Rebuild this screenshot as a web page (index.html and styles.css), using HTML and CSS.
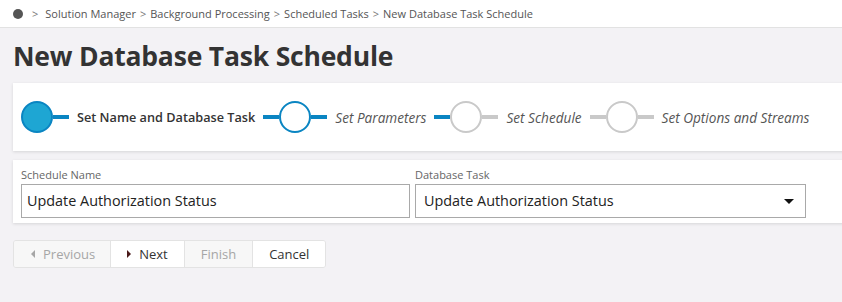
FILE: index.html
```html
<!DOCTYPE html>
<html lang="en">

<head>
    <meta charset="UTF-8">
    <meta name="viewport" content="width=device-width, initial-scale=1.0">
    <title>New Database Task Schedule</title>
    <link rel="stylesheet" href="styles.css">
</head>

<body>
    <div class="breadcrumb">
        <span class="home-dot"></span>
        <span class="sep first">&gt;</span>
        <span>Solution Manager</span>
        <span class="sep">&gt;</span>
        <span>Background Processing</span>
        <span class="sep">&gt;</span>
        <span>Scheduled Tasks</span>
        <span class="sep">&gt;</span>
        <span>New Database Task Schedule</span>
    </div>

    <div class="page">
        <h1>New Database Task Schedule</h1>

        <div class="panel wizard">
            <div class="step done">
                <span class="circle"></span>
                <span class="line"></span>
                <span class="step-label">Set Name and Database Task</span>
            </div>
            <div class="step current">
                <span class="line"></span>
                <span class="circle"></span>
                <span class="line"></span>
                <span class="step-label">Set Parameters</span>
            </div>
            <div class="step todo after-current">
                <span class="line"></span>
                <span class="circle"></span>
                <span class="line"></span>
                <span class="step-label">Set Schedule</span>
            </div>
            <div class="step todo">
                <span class="line"></span>
                <span class="circle"></span>
                <span class="line"></span>
                <span class="step-label">Set Options and Streams</span>
            </div>
        </div>

        <div class="panel form">
            <div class="field">
                <label>Schedule Name</label>
                <div class="input">Update Authorization Status</div>
            </div>
            <div class="field">
                <label>Database Task</label>
                <div class="input select">
                    <span>Update Authorization Status</span>
                    <span class="caret"></span>
                </div>
            </div>
        </div>

        <div class="buttons">
            <button class="disabled"><span class="tri left"></span>Previous</button>
            <button><span class="tri right"></span>Next</button>
            <button class="disabled">Finish</button>
            <button>Cancel</button>
        </div>
    </div>
</body>
</html>
```

FILE: styles.css
```css
body {
    font-family: "Open Sans", Arial, sans-serif;
    margin: 0;
    padding: 0;
    background-color: #f3f2f5;
    color: #333;
    overflow: hidden;
}

.breadcrumb {
    display: flex;
    align-items: center;
    gap: 4px;
    height: 27px;
    padding-left: 13px;
    background-color: #fff;
    border-bottom: 1px solid #e2e2e2;
    font-size: 11px;
    color: #555;
}

.home-dot {
    width: 10px;
    height: 10px;
    border-radius: 50%;
    background-color: #555;
    margin-right: 5px;
}

.sep {
    color: #777;
}

.sep.first {
    margin-right: 3px;
}

.page {
    padding: 0 0 0 13px;
}

h1 {
    font-size: 26.5px;
    font-weight: 700;
    color: #333;
    margin: 0;
    padding: 10px 0 8px;
    line-height: 37px;
    letter-spacing: -0.2px;
}

.panel {
    background-color: #fff;
    box-shadow: 0 1px 3px rgba(0, 0, 0, 0.12);
    margin-right: -20px;
}

.wizard {
    display: flex;
    align-items: center;
    height: 68px;
    padding-left: 8px;
}

.step {
    display: flex;
    align-items: center;
}

.line {
    width: 16px;
    height: 4px;
    background-color: #0a85c2;
}

.circle {
    width: 28px;
    height: 28px;
    border-radius: 50%;
    border: 2px solid #0a85c2;
    background-color: #fff;
}

.done .circle {
    background-color: #1ea6d3;
}

.step-label {
    font-size: 13.6px;
    margin: 0 8px;
    color: #555;
    font-style: italic;
}

.done .step-label {
    font-size: 12.7px;
    font-weight: 600;
    font-style: normal;
    color: #333;
}

.todo .circle {
    border-color: #c9c9c9;
}

.todo .line {
    background-color: #c9c9c9;
}

.todo.after-current .line:first-child {
    background-color: #0a85c2;
}

.form {
    display: flex;
    gap: 5px;
    margin-top: 9px;
    height: 63px;
    padding: 0 8px;
}

.field {
    display: flex;
    flex-direction: column;
}

.field label {
    font-size: 11px;
    color: #666;
    padding: 8px 0 3px;
    line-height: 13px;
}

.input {
    box-sizing: border-box;
    width: 389px;
    height: 34px;
    border: 1px solid #a9a9a9;
    padding: 0 5px;
    font-size: 14.4px;
    line-height: 32px;
    color: #222;
}

.select {
    width: 391px;
    display: flex;
    justify-content: space-between;
    align-items: center;
    padding-left: 8px;
    padding-right: 11px;
}

.caret {
    width: 0;
    height: 0;
    border-left: 5px solid transparent;
    border-right: 5px solid transparent;
    border-top: 5px solid #111;
}

.buttons {
    display: flex;
    margin-top: 17px;
    width: fit-content;
    border: 1px solid #e3e3e3;
    border-radius: 3px;
    overflow: hidden;
}

button {
    font-family: "Open Sans", Arial, sans-serif;
    font-size: 13px;
    height: 26px;
    padding: 0 16px;
    border: none;
    border-left: 1px solid #e3e3e3;
    background-color: #fff;
    color: #333;
    display: flex;
    align-items: center;
    cursor: pointer;
}

button:first-child {
    border-left: none;
    padding: 0 15px 0 17px;
}

button.disabled {
    background-color: #f7f7f7;
    color: #a6a6a6;
}

.tri {
    width: 0;
    height: 0;
    border-top: 4px solid transparent;
    border-bottom: 4px solid transparent;
    margin-right: 8px;
}

.tri.left {
    border-right: 4px solid #a6a6a6;
}

.tri.right {
    border-left: 4px solid #4a1a1a;
}
```
